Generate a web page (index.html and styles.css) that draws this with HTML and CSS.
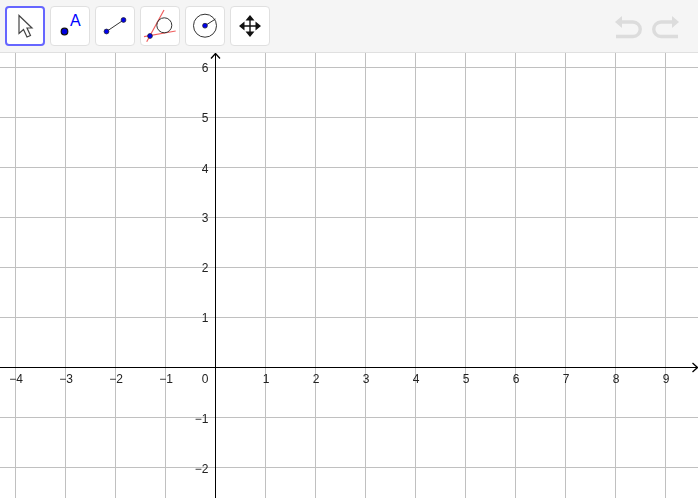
FILE: index.html
```html
<!DOCTYPE html>
<html lang="en">
<head>
<meta charset="utf-8">
<title>GeoGebra Graphing</title>
<link rel="stylesheet" href="styles.css">
</head>
<body>
<div class="app">
  <header class="toolbar">
    <div class="tools">
      <button class="tool selected" aria-label="Move">
        <svg viewBox="0 0 40 40" class="icon"><path d="M14 9.500V27.500l4.500-4 3.500 7.500 3.500-1.500-3.500-7.500H27z" fill="#fff" stroke="#444" stroke-width="1.200"/></svg>
      </button>
      <button class="tool" aria-label="Point">
        <svg viewBox="0 0 40 40" class="icon"><circle cx="14.500" cy="25.500" r="3.300" fill="#0000e0" stroke="#111" stroke-width="1.200"/><text x="20" y="19.500" class="icon-a">A</text></svg>
      </button>
      <button class="tool" aria-label="Line">
        <svg viewBox="0 0 40 40" class="icon"><path d="M11.500 25.500 28.500 14" stroke="#333" stroke-width="1" fill="none"/><circle cx="11.500" cy="25.500" r="2.400" fill="#0000ee" stroke="#223" stroke-width=".8"/><circle cx="28.500" cy="14" r="2.400" fill="#0000ee" stroke="#223" stroke-width=".8"/></svg>
      </button>
      <button class="tool" aria-label="Tangent">
        <svg viewBox="0 0 40 40" class="icon"><path d="M6.700 35.700 24 4M4 30.700 35.700 25" stroke="#f06060" stroke-width="1.200" fill="none"/><circle cx="24.300" cy="19.300" r="7.500" fill="none" stroke="#333" stroke-width="1"/><circle cx="10" cy="30" r="2.400" fill="#0000ee" stroke="#223" stroke-width=".8"/></svg>
      </button>
      <button class="tool" aria-label="Circle">
        <svg viewBox="0 0 40 40" class="icon"><circle cx="20" cy="19.700" r="11.500" fill="none" stroke="#333" stroke-width="1"/><path d="M20 19.700 30.500 13" stroke="#333" stroke-width="1"/><circle cx="20" cy="19.700" r="2.400" fill="#0000ee" stroke="#223" stroke-width=".8"/></svg>
      </button>
      <button class="tool" aria-label="Move Graphics View">
        <svg viewBox="0 0 40 40" class="icon"><path d="M20 12v16M12 20h16" stroke="#111" stroke-width="1.400"/><path d="M20 9l4.500 5.500h-9zM20 31l4.500-5.500h-9zM9 20l5.500-4.500v9zM31 20l-5.500-4.500v9z" fill="#111"/></svg>
      </button>
    </div>
    <div class="history">
      <svg viewBox="0 0 30 26" class="undo"><path d="M5 8h14a7.250 7.250 0 0 1 0 14.500H2" fill="none" stroke="#dcdcdc" stroke-width="3.400"/><path d="M1 8l7-6v12z" fill="#dcdcdc"/></svg>
      <svg viewBox="0 0 30 26" class="undo"><path d="M25 8H11a7.250 7.250 0 0 0 0 14.500h17" fill="none" stroke="#dcdcdc" stroke-width="3.400"/><path d="M29 8l-7-6v12z" fill="#dcdcdc"/></svg>
    </div>
  </header>
  <svg class="graph" viewBox="0 0 698 445" role="img" aria-label="Coordinate grid">
    <path class="grid" d="M15.500 0V445M65.500 0V445M115.500 0V445M165.500 0V445M265.500 0V445M315.500 0V445M365.500 0V445M415.500 0V445M465.500 0V445M515.500 0V445M565.500 0V445M615.500 0V445M665.500 0V445"/>
    <path class="grid" d="M0 14.500H698M0 64.500H698M0 114.500H698M0 164.500H698M0 214.500H698M0 264.500H698M0 364.500H698M0 414.500H698"/>
    <path class="axis" d="M215.500 1V445M0 314.500H697"/>
    <path class="axis arrow" d="M211 5.500 215.500 0.500 220 5.500M692.500 310 697.500 314.500 692.500 319"/>
    <g class="labels labels-x">
      <text x="16" y="330">−4</text><text x="66" y="330">−3</text><text x="116" y="330">−2</text><text x="166" y="330">−1</text>
      <text x="266" y="330">1</text><text x="316" y="330">2</text><text x="366" y="330">3</text><text x="416" y="330">4</text><text x="466" y="330">5</text><text x="516" y="330">6</text><text x="566" y="330">7</text><text x="616" y="330">8</text><text x="666" y="330">9</text>
    </g>
    <g class="labels labels-y">
      <text x="208.500" y="330">0</text>
      <text x="208.500" y="19">6</text><text x="208.500" y="69">5</text><text x="208.500" y="120">4</text><text x="208.500" y="169">3</text><text x="208.500" y="219">2</text><text x="208.500" y="269">1</text><text x="208.500" y="370">−1</text><text x="208.500" y="420">−2</text>
    </g>
  </svg>
</div>
</body>
</html>
```
FILE: styles.css
```css
html, body {
  margin: 0;
  padding: 0;
  background: #fff;
}
.app {
  width: 698px;
  height: 498px;
  display: flex;
  flex-direction: column;
  overflow: hidden;
  font-family: "Liberation Sans", Arial, sans-serif;
}
.toolbar {
  box-sizing: border-box;
  height: 53px;
  flex: none;
  width: 698px;
  background: #f5f5f5;
  border-bottom: 1px solid #e0e0e0;
  display: flex;
  justify-content: space-between;
  align-items: flex-start;
  padding: 6px 18px 0 5px;
}
.tools {
  display: flex;
  gap: 5px;
}
.tool {
  box-sizing: border-box;
  width: 40px;
  height: 40px;
  padding: 0;
  background: #fff;
  border: 1px solid #e0e0e0;
  border-radius: 4px;
  display: block;
  position: relative;
}
.tool.selected {
  border: 2px solid #6666ff;
}
.icon {
  position: absolute;
  left: -1px;
  top: -1px;
  width: 40px;
  height: 40px;
  display: block;
}
.selected .icon {
  left: -2px;
  top: -2px;
}
.icon-a {
  font-family: "Liberation Sans", Arial, sans-serif;
  font-size: 16px;
  fill: #0000ff;
}
.history {
  display: flex;
  gap: 6px;
  margin-top: 8px;
}
.undo {
  width: 30px;
  height: 26px;
  display: block;
}
.graph {
  width: 698px;
  height: 445px;
  flex: none;
  display: block;
  overflow: hidden;
  will-change: opacity;
}
.grid {
  stroke: #c0c0c0;
  stroke-width: 1;
  fill: none;
  shape-rendering: crispEdges;
}
.axis {
  stroke: #000;
  stroke-width: 1;
  fill: none;
}
.arrow {
  stroke-width: 1.300;
}
.labels text {
  font-family: "Liberation Sans", Arial, sans-serif;
  font-size: 12px;
  fill: #222;
}
.labels-x text {
  text-anchor: middle;
}
.labels-y text {
  text-anchor: end;
}
```
